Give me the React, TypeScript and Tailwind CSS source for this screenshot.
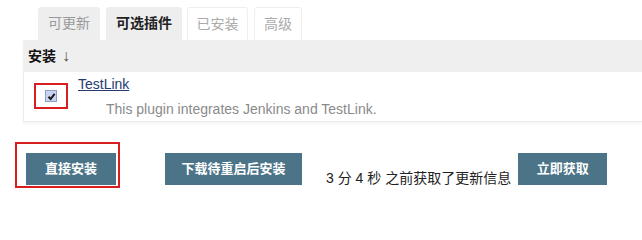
import React from "react";

export default function App() {
  const font = { fontFamily: '"Liberation Sans", "Noto Sans CJK SC", sans-serif' };
  return (
    <div className="w-[642px] h-[209px] bg-white overflow-hidden text-[#333]" style={font}>
      {/* tabs */}
      <div className="flex items-end pl-[38px] pt-[7px] h-[40px]">
        <div className="w-[62px] h-[33px] bg-[#eeeeee] rounded-t-[3px] flex items-center justify-center text-[14px] text-[#999]">
          可更新
        </div>
        <div className="ml-[6px] w-[76px] h-[33px] bg-[#eeeeee] rounded-t-[3px] flex items-center justify-center text-[14px] font-bold text-[#222]">
          可选插件
        </div>
        <div className="ml-[5px] w-[61px] h-[33px] bg-white border border-b-0 border-[#eeeeee] rounded-t-[3px] flex items-center justify-center text-[14px] text-[#aaa]">
          已安装
        </div>
        <div className="ml-[6px] w-[48px] h-[33px] bg-white border border-b-0 border-[#eeeeee] rounded-t-[3px] flex items-center justify-center text-[14px] text-[#aaa]">
          高级
        </div>
      </div>
      {/* table */}
      <div className="ml-[23px] shadow-[0_2px_2px_rgba(0,0,0,0.04)]">
        <div className="h-[32px] bg-[#efefef] flex items-center pl-[5px] text-[14px] font-bold text-[#111]">
          安装<span className="ml-[6px] font-normal text-[16px] text-[#555]">↓</span>
        </div>
        <div className="h-[50px] border-l border-b border-[#ececec] flex">
          <div className="pl-[10px] pt-[11px]">
            <div className="w-[34px] h-[26px] border-2 border-[#d81e1e] flex items-center justify-center">
              <div className="w-[12px] h-[12px] border border-[#8c9fc6] bg-[#c9d3f2] flex items-center justify-center">
                <svg width="9" height="9" viewBox="0 0 9 9">
                  <path d="M1.5 4.8 L3.6 7 L7.6 1.8" stroke="#1a1a1a" strokeWidth="2" fill="none" />
                </svg>
              </div>
            </div>
          </div>
          <div className="ml-[10px] pt-[4px] flex flex-col items-start">
            <a className="text-[14px] leading-[17px] text-[#243c6e] underline" href="#">
              TestLink
            </a>
            <div className="ml-[28px] mt-[8px] text-[14px] leading-[17px] text-[#8a8a8a]">
              This plugin integrates Jenkins and TestLink.
            </div>
          </div>
        </div>
      </div>
      {/* bottom */}
      <div className="flex items-start pl-[15px] mt-[20px]">
        <div className="border-2 border-[#d81e1e] pt-[9px] pl-[9px] pr-[2px] pb-[1px]">
          <button className="w-[90px] h-[32px] bg-[#4b7489] text-white text-[13px] font-bold">
            直接安装
          </button>
        </div>
        <button className="ml-[45px] mt-[11px] w-[137px] h-[32px] bg-[#4b7489] text-white text-[13px] font-bold">
          下载待重启后安装
        </button>
        <div className="ml-[24px] mt-[28px] text-[14px] leading-[16px] text-[#222]">
          3 分 4 秒 之前获取了更新信息
        </div>
        <button className="ml-[7px] mt-[11px] w-[89px] h-[32px] bg-[#4b7489] text-white text-[13px] font-bold">
          立即获取
        </button>
      </div>
    </div>
  );
}
